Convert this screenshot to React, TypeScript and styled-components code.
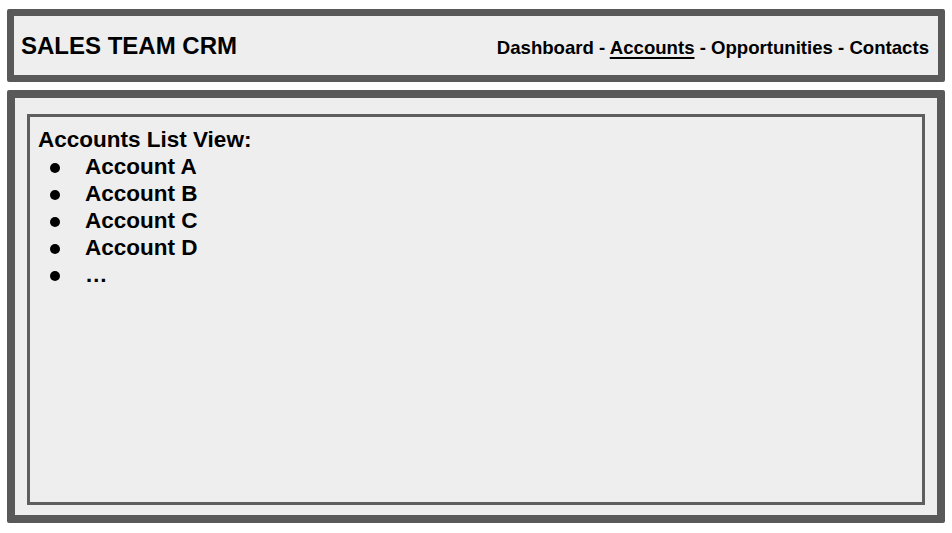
import React from "react";
import styled, { createGlobalStyle } from "styled-components";

const Global = createGlobalStyle`
  html, body { margin: 0; padding: 0; background: #ffffff; }
  body { font-family: "Liberation Sans", Arial, sans-serif; color: #000; }
`;

const Page = styled.div`
  width: 952px;
  height: 533px;
  box-sizing: border-box;
  padding: 9px 7px 10px 7px;
  display: flex;
  flex-direction: column;
  gap: 8px;
`;

const Header = styled.header`
  box-sizing: border-box;
  height: 73px;
  border: 7px solid #595959;
  border-radius: 2px;
  background: #eeeeee;
  display: flex;
  align-items: center;
  justify-content: space-between;
  padding: 0 9px 0 7px;
`;

const Title = styled.h1`
  margin: 0;
  font-size: 24px;
  font-weight: bold;
`;

const Nav = styled.nav`
  font-size: 18.6px;
  font-weight: bold;
  padding-top: 4px;
`;

const NavLink = styled.span<{ $active?: boolean }>`
  text-decoration: ${(p) => (p.$active ? "underline" : "none")};
  text-decoration-thickness: 2px;
  text-underline-offset: 3px;
`;

const Main = styled.main`
  flex: 1;
  box-sizing: border-box;
  border: 8px solid #595959;
  border-radius: 2px;
  background: #eeeeee;
  padding: 16px 12px 10px 12px;
  display: flex;
`;

const Panel = styled.section`
  flex: 1;
  box-sizing: border-box;
  border: 3px solid #5e5e5e;
  padding: 9px 8px;
  font-size: 22.5px;
  font-weight: bold;
  line-height: 27px;
`;

const PanelTitle = styled.div``;

const List = styled.ul`
  list-style: none;
  margin: 0;
  padding: 0;
`;

const Item = styled.li`
  position: relative;
  padding-left: 47px;
  &::before {
    content: "";
    position: absolute;
    left: 12px;
    top: 10px;
    width: 10px;
    height: 10px;
    border-radius: 50%;
    background: #000;
  }
`;

const items = ["Account A", "Account B", "Account C", "Account D", "…"];
const nav = ["Dashboard", "Accounts", "Opportunities", "Contacts"];

export default function App() {
  return (
    <>
      <Global />
      <Page>
        <Header>
          <Title>SALES TEAM CRM</Title>
          <Nav>
            {nav.map((n, i) => (
              <React.Fragment key={n}>
                {i > 0 && " - "}
                <NavLink $active={n === "Accounts"}>{n}</NavLink>
              </React.Fragment>
            ))}
          </Nav>
        </Header>
        <Main>
          <Panel>
            <PanelTitle>Accounts List View:</PanelTitle>
            <List>
              {items.map((it) => (
                <Item key={it}>{it}</Item>
              ))}
            </List>
          </Panel>
        </Main>
      </Page>
    </>
  );
}
